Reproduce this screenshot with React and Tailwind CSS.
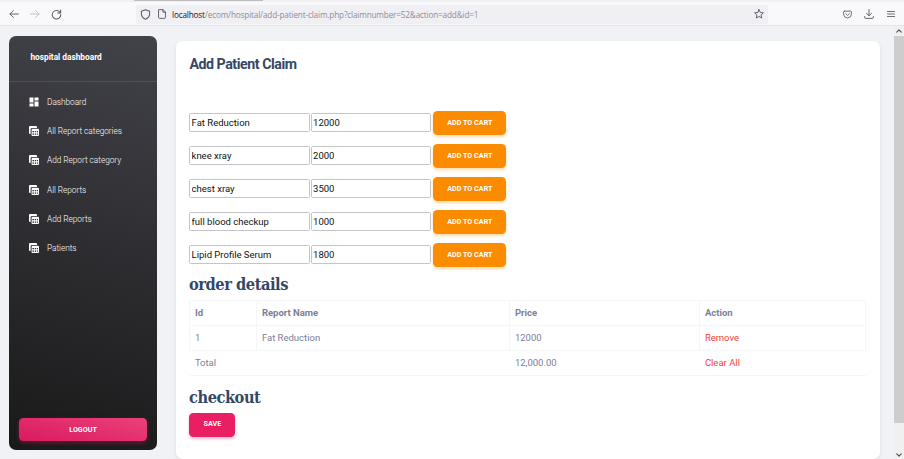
import React from "react";
import { MdDashboard } from "react-icons/md";

function TableIcon({ className }) {
  return (
    <svg className={className} viewBox="0 0 24 24" fill="currentColor">
      <path d="M4 2h12a2 2 0 0 1 2 2v2H8a2.500 2.500 0 0 0-2.500 2.500V18H4a2 2 0 0 1-2-2V4a2 2 0 0 1 2-2z" />
      <path
        fillRule="evenodd"
        d="M9 7.500h11a2 2 0 0 1 2 2V20a2 2 0 0 1-2 2H9a2 2 0 0 1-2-2V9.500a2 2 0 0 1 2-2zM9 12v2.500h3V12zm4.500 0v2.500h2.500V12zm4 0v2.500H20V12zM9 17v2.500h3V17zm4.500 0v2.500h2.500V17zm4 0v2.500H20V17z"
      />
      <path d="M5.500 8.500A2.500 2.500 0 0 1 8 6h10v1.200H9A2.200 2.200 0 0 0 6.800 9.400V18H5.500z" fill="#55555b" />
    </svg>
  );
}

const navItems = [
  { label: "Dashboard", Icon: MdDashboard },
  { label: "All Report categories", Icon: TableIcon },
  { label: "Add Report category", Icon: TableIcon },
  { label: "All Reports", Icon: TableIcon },
  { label: "Add Reports", Icon: TableIcon },
  { label: "Patients", Icon: TableIcon },
];

const reports = [
  ["Fat Reduction", "12000"],
  ["knee xray", "2000"],
  ["chest xray", "3500"],
  ["full blood checkup", "1000"],
  ["Lipid Profile Serum", "1800"],
];

function Line({ className, children, viewBox = "0 0 16 16", strokeWidth = 1.5 }) {
  return (
    <svg
      className={"shrink-0 " + className}
      viewBox={viewBox}
      fill="none"
      stroke="currentColor"
      strokeWidth={strokeWidth}
      strokeLinecap="round"
      strokeLinejoin="round"
    >
      {children}
    </svg>
  );
}

function BrowserBar() {
  return (
    <header className="shrink-0">
      <div className="h-[2px] bg-[#f0f0f2] pl-[134px]">
        <div className="h-[1px] w-[129px] bg-[#bdbdc0]" />
      </div>
      <div className="flex h-[23px] items-center bg-[#f9f9fb] pt-px text-[#5b5b66]">
        <Line className="ml-[9px] size-[10px]">
          <path d="M15 8H1.5M7 2.5 1.5 8 7 13.5" />
        </Line>
        <Line className="ml-[11px] size-[10px] text-[#bcbcc2]">
          <path d="M1 8h13.500M9 2.500 14.500 8 9 13.500" />
        </Line>
        <Line className="ml-[11px] size-[11px]">
          <path d="M13.500 5.500A6.200 6.200 0 1 0 14.200 8M14 1.500v4.300H9.700" />
        </Line>
        <div className="ml-[74px] flex h-[19px] w-[632px] items-center rounded-[2px] bg-[#f0f0f4]">
          <Line className="ml-[4px] size-[11px]">
            <path d="M8 1 14 3.200V7c0 4-2.500 6.500-6 8-3.500-1.500-6-4-6-8V3.200z" />
          </Line>
          <Line className="ml-[6px] size-[10px]">
            <path d="M3 1h6.500L13.500 5v8.500A1.500 1.500 0 0 1 12 15H4a1.500 1.500 0 0 1-1.500-1.500V2M9.500 1v4h4" />
          </Line>
          <span className="ml-[5px] whitespace-nowrap pt-[2px] font-['Open_Sans',sans-serif] text-[8.2px] leading-[12px] tracking-[-0.160px] text-[#8d8d96]">
            <span className="text-[#15141a]">localhost</span>
            /ecom/hospital/add-patient-claim.php?claimnumber=52&amp;action=add&amp;id=1
          </span>
          <Line className="ml-auto mr-[4px] size-[10px]">
            <path d="m8 1 2.100 4.500 4.900.6-3.600 3.400.9 4.900L8 12l-4.300 2.400.9-4.900L1 6.100l4.900-.6z" />
          </Line>
        </div>
        <Line className="ml-[75px] size-[9px]">
          <path d="M2.500 2h11A1.500 1.500 0 0 1 15 3.500V7A7 7 0 0 1 1 7V3.500A1.500 1.500 0 0 1 2.500 2zM4.800 6.500 8 9.500l3.200-3" />
        </Line>
        <Line className="ml-[12px] size-[10px]">
          <path d="M8 1v9.500M4 7l4 3.800L12 7M1 12v1.500A1.500 1.500 0 0 0 2.500 15h11a1.500 1.500 0 0 0 1.500-1.500V12" />
        </Line>
        <Line className="ml-[13px] size-[8px]" strokeWidth={1.800}>
          <path d="M1 3h14M1 8h14M1 13h14" />
        </Line>
      </div>
      <div className="h-px bg-[#e6e6ea]" />
    </header>
  );
}

function Sidebar() {
  return (
    <aside className="ml-[9.4px] mt-[9.700px] flex h-[414.800px] w-[147.400px] shrink-0 flex-col rounded-[7px] bg-[linear-gradient(195deg,#42424a,#191919)]">
      <div className="h-[45px] pl-[21px] pt-[14px] text-[8.300px] font-bold leading-[14px] text-white">
        hospital dashboard
      </div>
      <div className="h-px bg-white/10" />
      <nav className="pt-[5.500px]">
        {navItems.map(({ label, Icon }) => (
          <div key={label} className="flex h-[29.300px] items-center pl-[18.600px] text-white">
            <Icon className="size-[12px]" />
            <span className="ml-[7px] whitespace-nowrap text-[8.300px] font-light leading-[14px] tracking-[-0.030px] text-white">
              {label}
            </span>
          </div>
        ))}
      </nav>
      <button className="mx-[9.500px] mb-[9.200px] mt-auto h-[23.500px] rounded-[4.500px] bg-[linear-gradient(195deg,#ec407a,#d81b60)] pt-px text-[7.200px] font-bold text-white shadow-[0_2px_4px_rgba(233,30,99,0.35)]">
        LOGOUT
      </button>
    </aside>
  );
}

function SlabHeading({ children, className }) {
  return (
    <h2
      className={
        "origin-left scale-x-[0.93] whitespace-nowrap font-['DejaVu_Serif_Condensed','DejaVu_Serif',serif] text-[17.500px] font-bold tracking-[-0.500px] text-[#344767] [font-stretch:condensed] " +
        className
      }
    >
      {children}
    </h2>
  );
}

function OrderTable() {
  const cell = "border border-[#f5f6f8] px-[4.500px] py-0";
  return (
    <table className="h-[76px] w-[676px] table-fixed border-collapse text-left text-[9.500px] leading-[14px] text-[#7b809a]">
      <colgroup>
        <col className="w-[67px]" />
        <col className="w-[253px]" />
        <col className="w-[190px]" />
        <col className="w-[166px]" />
      </colgroup>
      <tbody>
        <tr className="h-[25px] font-bold">
          <th className={cell}>Id</th>
          <th className={cell}>Report Name</th>
          <th className={cell}>Price</th>
          <th className={cell}>Action</th>
        </tr>
        <tr className="h-[25px]">
          <td className={cell}>1</td>
          <td className={cell}>Fat Reduction</td>
          <td className={cell}>12000</td>
          <td className={cell + " text-[#f44335]"}>Remove</td>
        </tr>
        <tr className="h-[25px] border-b border-[#f5f6f8]">
          <td colSpan={2} className="px-[5px]">Total</td>
          <td className="px-[5px]">12,000.00</td>
          <td className="px-[5px] text-[#f44335]">Clear All</td>
        </tr>
      </tbody>
    </table>
  );
}

function ClaimCard() {
  const field =
    "h-[19px] rounded-[1.500px] border border-[#c4c4ca] bg-white px-[1.200px] text-[9.500px] leading-[14px] text-[#111]";
  return (
    <main className="ml-[18.800px] mt-[14.500px] h-[418.500px] w-[704.400px] shrink-0 rounded-[7px] bg-white pl-[13.800px] shadow-[0_2px_4px_rgba(0,0,0,0.08)]">
      <h1 className="h-[70.500px] pt-[13.500px] text-[14.200px] font-bold leading-[20px] tracking-[-0.450px] text-[#344767]">
        Add Patient Claim
      </h1>
      {reports.map(([name, price]) => (
        <div key={name} className="flex h-[33px] items-start">
          <input className={field + " mt-[2px] w-[120.500px]"} defaultValue={name} />
          <input className={field + " ml-[1px] mt-[2px] w-[120px]"} defaultValue={price} />
          <button className="ml-[2px] h-[23.500px] w-[73px] rounded-[4.500px] bg-[#fb8c00] text-[7.200px] font-bold text-white shadow-[0_2px_3px_rgba(251,140,0,0.3)]">
            <span className="block pl-px pt-px">ADD TO CART</span>
          </button>
        </div>
      ))}
      <SlabHeading className="h-[24px] leading-[16px]">order details</SlabHeading>
      <OrderTable />
      <SlabHeading className="h-[37px] pt-[11px] leading-[20px]">checkout</SlabHeading>
      <button className="block h-[23.500px] w-[46px] rounded-[4.500px] bg-[#e91e63] text-[7.200px] font-bold text-white shadow-[0_2px_3px_rgba(233,30,99,0.3)]">
        SAVE
      </button>
    </main>
  );
}

function Scrollbar() {
  return (
    <div className="ml-auto flex h-full w-[10px] shrink-0 flex-col items-center bg-[#f0f0f0] text-[#505050]">
      <Line className="my-[2px] size-[6px]" strokeWidth={3}>
        <path d="m2 11 6-6 6 6" />
      </Line>
      <div className="h-[387px] w-full bg-[#cdcdcd]" />
      <Line className="mb-px mt-auto size-[6px]" strokeWidth={3}>
        <path d="m2 5 6 6 6-6" />
      </Line>
    </div>
  );
}

export default function App() {
  return (
    <div className="flex h-[459px] w-[904px] flex-col overflow-hidden bg-[#f0f2f5] font-[Roboto,sans-serif]">
      <BrowserBar />
      <div className="flex min-h-0 flex-1 items-start">
        <Sidebar />
        <ClaimCard />
        <Scrollbar />
      </div>
    </div>
  );
}
